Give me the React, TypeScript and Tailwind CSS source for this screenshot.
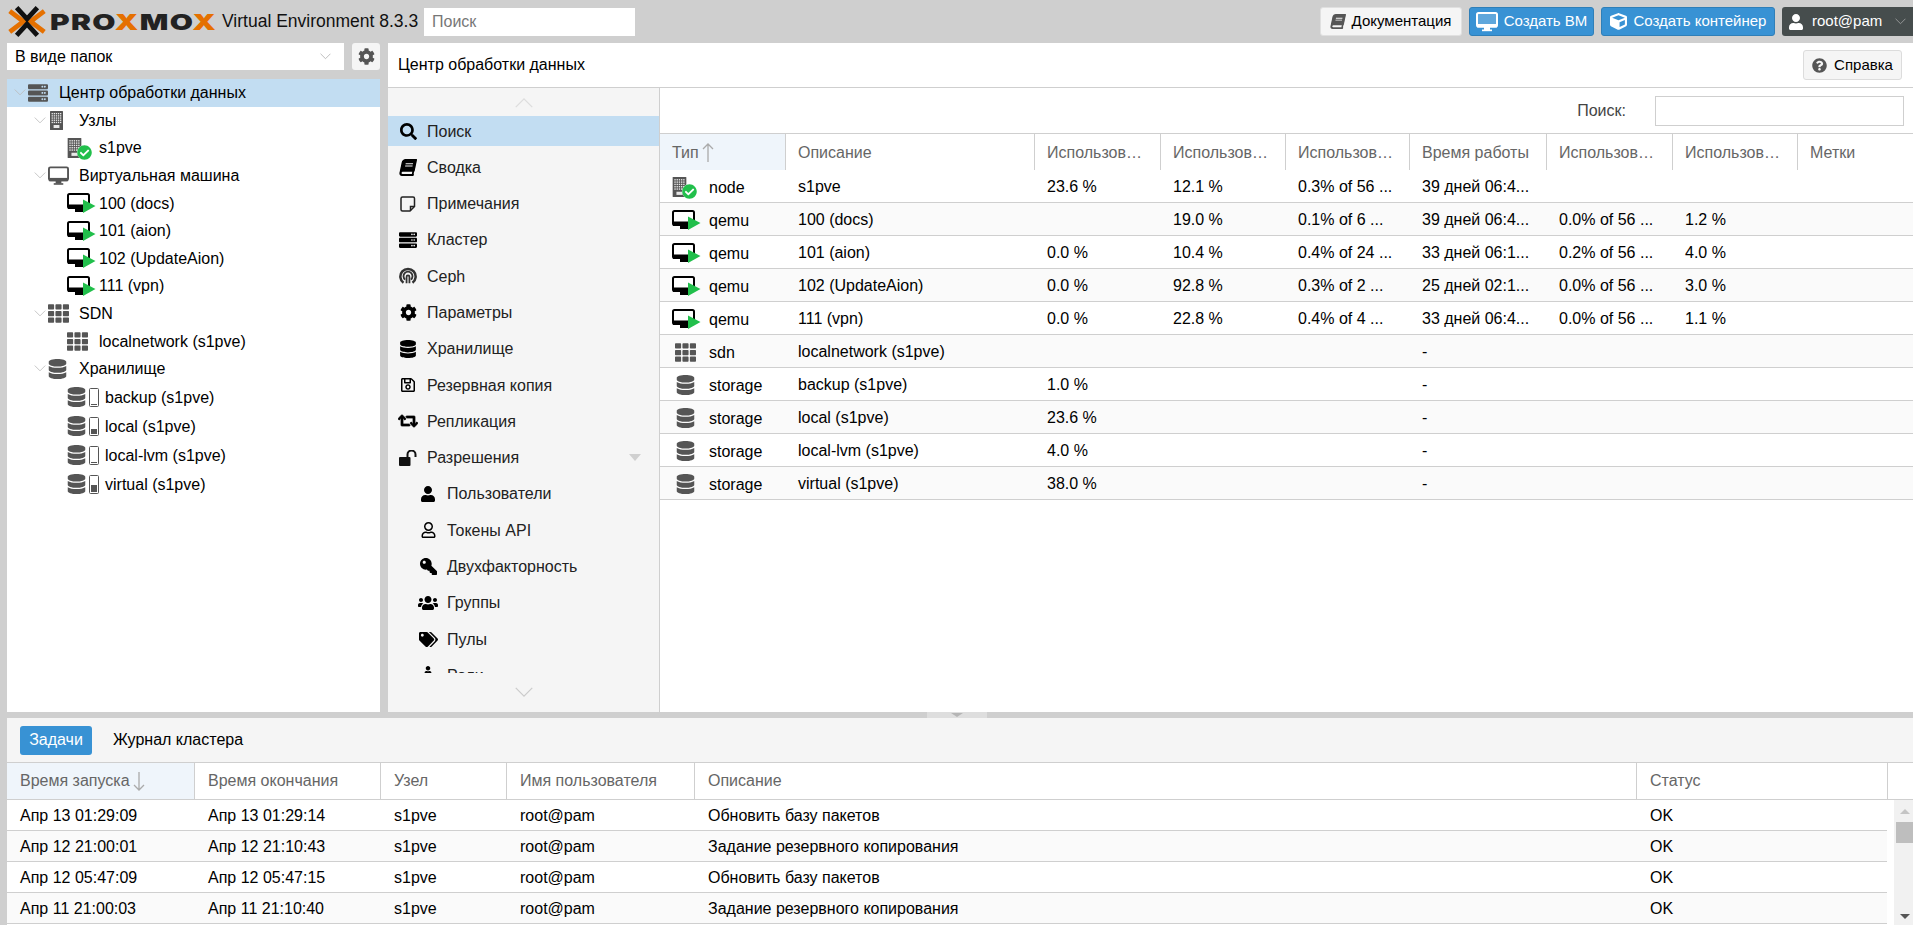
import React from 'react';
import {
  FaBook, FaCheckCircle, FaCog, FaCube, FaDatabase, FaKey, FaMale, FaQuestionCircle, FaRegSave,
  FaRegUser, FaRetweet, FaSearch, FaServer, FaTags, FaTh, FaUser, FaUsers,
} from 'react-icons/fa';

const Chevron = ({ up = false, className = '' }: { up?: boolean; className?: string }) => (
  <svg viewBox="0 0 20 12" className={className} fill="none" stroke="currentColor" strokeWidth="1.4">
    <polyline points={up ? '1,11 10,2 19,11' : '1,1 10,10 19,1'} />
  </svg>
);

const DesktopIcon = ({ className = '', screen = 0.9 }: { className?: string; screen?: number }) => (
  <svg viewBox="0 0 22 20" className={className} fill="none">
    <rect x="1" y="1" width="20" height="13.5" rx="1.5" fill="#fff" fillOpacity={screen} stroke="currentColor" strokeWidth="2" />
    <rect x="1" y="12" width="20" height="3.5" fill="currentColor" />
    <rect x="8" y="15" width="6" height="3" fill="currentColor" />
    <rect x="6" y="17.5" width="10" height="1.7" fill="currentColor" />
  </svg>
);

const QemuIcon = () => (
  <svg viewBox="0 0 29 20" className="w-[29px] h-[20px] shrink-0">
    <rect x="1" y="1" width="21" height="14" rx="1.5" fill="#fff" stroke="#000" strokeWidth="2" />
    <rect x="1" y="11.5" width="21" height="4.5" fill="#000" />
    <rect x="8" y="15" width="8" height="4" fill="#000" />
    <polygon points="16,6.5 28.5,13 16,20" fill="#21bf4b" />
  </svg>
);

const BuildingIcon = ({ className = '' }: { className?: string }) => (
  <svg viewBox="0 0 13 19" className={className}>
    <rect width="13" height="19" rx="0.5" fill="#555" />
    {[2, 4.2, 6.4, 8.6, 10.8].map((y) =>
      [1.6, 3.7, 5.8, 7.9, 10].map((x) => <rect key={`${x}-${y}`} x={x} y={y} width="1.3" height="1.3" fill="#e8e8e8" />),
    )}
    <rect x="3.6" y="14" width="5.8" height="3" fill="#e8e8e8" />
  </svg>
);

const NodeIcon = () => (
  <span className="relative inline-block w-[25px] h-[20px] shrink-0">
    <BuildingIcon className="absolute left-0 top-0 h-[20px] w-[15px]" />
    <span className="absolute left-[10px] top-[7px] w-[15px] h-[15px] rounded-full bg-white">
      <FaCheckCircle className="w-[15px] h-[15px] text-[#21bf4b]" />
    </span>
  </span>
);

const NoteIcon = () => (
  <svg viewBox="0 0 16 16" className="w-[16px] h-[16px]" fill="none" stroke="#222" strokeWidth="1.5">
    <path d="M2.5 1 H13 a1.5 1.5 0 0 1 1.5 1.5 V10.5 L10 15 H2.5 A1.5 1.5 0 0 1 1 13.5 V2.5 A1.5 1.5 0 0 1 2.5 1 Z" />
    <path d="M14 10.5 H10.5 V14.5" />
  </svg>
);

const UnlockIcon = () => (
  <svg viewBox="0 0 18 16" className="w-[18px] h-[16px]" fill="#111">
    <rect x="0" y="7" width="11.5" height="9" rx="1" />
    <path d="M8.5 7 V4.5 A4 4 0 0 1 16.5 4.5 V7" fill="none" stroke="#111" strokeWidth="2" />
  </svg>
);

const CephIcon = () => (
  <svg viewBox="0 0 20 20" className="w-[18px] h-[18px]" fill="none" stroke="#333">
    <path d="M5 17.5 A8.5 8.5 0 1 1 15 17.5" strokeWidth="2.8" />
    <path d="M6.8 14 A5 5 0 1 1 13.2 14" strokeWidth="2" />
    <path d="M8.4 18 V11 a1.6 1.6 0 0 1 3.2 0 V18" strokeWidth="2" />
  </svg>
);

const UsageIcon = ({ level }: { level: number }) => (
  <span className="relative inline-block w-[10px] h-[19px] shrink-0 rounded-[1.5px] border border-[#555] bg-white">
    <span className="absolute left-[1px] right-[1px] bottom-[1px] bg-[#555]" style={{ height: level }} />
  </span>
);

const Arrow = ({ down = false }: { down?: boolean }) => (
  <svg viewBox="0 0 12 20" className="w-[12px] h-[20px] text-[#aaa]" fill="none" stroke="currentColor" strokeWidth="1.3">
    {down ? <path d="M6 1 V19 M1 14 L6 19 L11 14" /> : <path d="M6 19 V1 M1 6 L6 1 L11 6" />}
  </svg>
);

type TreeRow = { depth: number; open?: boolean; icon: React.ReactNode; label: string; selected?: boolean; h?: string };

const storage = (level: number) => (
  <span className="flex items-center gap-[3px] w-[38px] shrink-0">
    <FaDatabase className="w-[19px] h-[20px] text-[#555]" />
    <UsageIcon level={level} />
  </span>
);

const treeRows: TreeRow[] = [
  { depth: 0, open: true, selected: true, icon: <FaServer className="w-[20px] h-[20px] text-[#555]" />, label: 'Центр обработки данных' },
  { depth: 1, open: true, icon: <BuildingIcon className="w-[13px] h-[19px] ml-[2px]" />, label: 'Узлы' },
  { depth: 2, icon: <NodeIcon />, label: 's1pve' },
  { depth: 1, open: true, icon: <DesktopIcon className="w-[21px] h-[20px] text-[#555]" />, label: 'Виртуальная машина' },
  { depth: 2, icon: <QemuIcon />, label: '100 (docs)' },
  { depth: 2, icon: <QemuIcon />, label: '101 (aion)' },
  { depth: 2, icon: <QemuIcon />, label: '102 (UpdateAion)' },
  { depth: 2, icon: <QemuIcon />, label: '111 (vpn)' },
  { depth: 1, open: true, icon: <FaTh className="w-[21px] h-[21px] text-[#555]" />, label: 'SDN' },
  { depth: 2, icon: <FaTh className="w-[21px] h-[21px] text-[#555]" />, label: 'localnetwork (s1pve)' },
  { depth: 1, open: true, icon: <FaDatabase className="w-[19px] h-[20px] text-[#555]" />, label: 'Хранилище' },
  { depth: 2, icon: storage(1), label: 'backup (s1pve)', h: 'h-[29px]' },
  { depth: 2, icon: storage(5), label: 'local (s1pve)', h: 'h-[29px]' },
  { depth: 2, icon: storage(1), label: 'local-lvm (s1pve)', h: 'h-[29px]' },
  { depth: 2, icon: storage(7), label: 'virtual (s1pve)', h: 'h-[29px]' },
];

const depthPad: Record<number, string> = { 0: 'pl-[7px]', 1: 'pl-[27px]', 2: 'pl-[60px]' };
const iconBox: Record<number, string> = { 0: 'min-w-[31px]', 1: 'min-w-[31px]', 2: 'min-w-[32px]' };

const navRows: { icon: React.ReactNode; label: string; sub?: boolean; selected?: boolean; caret?: boolean }[] = [
  { icon: <FaSearch className="w-[17px] h-[17px]" />, label: 'Поиск', selected: true },
  { icon: <FaBook className="w-[16px] h-[17px] -skew-x-12" />, label: 'Сводка' },
  { icon: <NoteIcon />, label: 'Примечания' },
  { icon: <FaServer className="w-[18px] h-[18px]" />, label: 'Кластер' },
  { icon: <CephIcon />, label: 'Ceph' },
  { icon: <FaCog className="w-[17px] h-[17px]" />, label: 'Параметры' },
  { icon: <FaDatabase className="w-[16px] h-[18px]" />, label: 'Хранилище' },
  { icon: <FaRegSave className="w-[16px] h-[16px]" />, label: 'Резервная копия' },
  { icon: <FaRetweet className="w-[20px] h-[18px] stroke-current stroke-[24]" />, label: 'Репликация' },
  { icon: <UnlockIcon />, label: 'Разрешения', caret: true },
  { icon: <FaUser className="w-[14px] h-[16px]" />, label: 'Пользователи', sub: true },
  { icon: <FaRegUser className="w-[15px] h-[16px]" />, label: 'Токены API', sub: true },
  { icon: <FaKey className="w-[17px] h-[17px] -scale-x-100" />, label: 'Двухфакторность', sub: true },
  { icon: <FaUsers className="w-[20px] h-[18px]" />, label: 'Группы', sub: true },
  { icon: <FaTags className="w-[19px] h-[17px]" />, label: 'Пулы', sub: true },
  { icon: <FaMale className="w-[14px] h-[18px]" />, label: 'Роли', sub: true },
];

const colW = ['w-[126px]', 'w-[249px]', 'w-[126px]', 'w-[125px]', 'w-[124px]', 'w-[137px]', 'w-[126px]', 'w-[125px]', 'w-[115px]'];
const headers = ['Тип', 'Описание', 'Использов…', 'Использов…', 'Использов…', 'Время работы', 'Использов…', 'Использов…', 'Метки'];

const typeIcon = (t: string) => {
  if (t === 'node') return <NodeIcon />;
  if (t === 'qemu') return <QemuIcon />;
  if (t === 'sdn') return <FaTh className="w-[21px] h-[21px] ml-[3px] text-[#555]" />;
  return <FaDatabase className="w-[19px] h-[20px] ml-[4px] text-[#555]" />;
};

const resources: string[][] = [
  ['node', 's1pve', '23.6 %', '12.1 %', '0.3% of 56 ...', '39 дней 06:4...', '', ''],
  ['qemu', '100 (docs)', '', '19.0 %', '0.1% of 6 ...', '39 дней 06:4...', '0.0% of 56 ...', '1.2 %'],
  ['qemu', '101 (aion)', '0.0 %', '10.4 %', '0.4% of 24 ...', '33 дней 06:1...', '0.2% of 56 ...', '4.0 %'],
  ['qemu', '102 (UpdateAion)', '0.0 %', '92.8 %', '0.3% of 2 ...', '25 дней 02:1...', '0.0% of 56 ...', '3.0 %'],
  ['qemu', '111 (vpn)', '0.0 %', '22.8 %', '0.4% of 4 ...', '33 дней 06:4...', '0.0% of 56 ...', '1.1 %'],
  ['sdn', 'localnetwork (s1pve)', '', '', '', '-', '', ''],
  ['storage', 'backup (s1pve)', '1.0 %', '', '', '-', '', ''],
  ['storage', 'local (s1pve)', '23.6 %', '', '', '-', '', ''],
  ['storage', 'local-lvm (s1pve)', '4.0 %', '', '', '-', '', ''],
  ['storage', 'virtual (s1pve)', '38.0 %', '', '', '-', '', ''],
];

const taskCols = ['w-[188px]', 'w-[186px]', 'w-[126px]', 'w-[188px]', 'w-[942px]', 'w-[251px]'];
const taskHeaders = ['Время запуска', 'Время окончания', 'Узел', 'Имя пользователя', 'Описание', 'Статус'];
const tasks = [
  ['Апр 13 01:29:09', 'Апр 13 01:29:14', 's1pve', 'root@pam', 'Обновить базу пакетов', 'OK'],
  ['Апр 12 21:00:01', 'Апр 12 21:10:43', 's1pve', 'root@pam', 'Задание резервного копирования', 'OK'],
  ['Апр 12 05:47:09', 'Апр 12 05:47:15', 's1pve', 'root@pam', 'Обновить базу пакетов', 'OK'],
  ['Апр 11 21:00:03', 'Апр 11 21:10:40', 's1pve', 'root@pam', 'Задание резервного копирования', 'OK'],
];

const Logo = () => (
  <div className="flex items-center ml-[8px] w-[214px] shrink-0">
    <svg viewBox="0 0 44 36" className="w-[38px] h-[33px] shrink-0" fill="none" strokeWidth="5.5">
      <polyline points="2,6 18,18 2,30" stroke="#e57000" />
      <polyline points="42,6 26,18 42,30" stroke="#e57000" />
      <polyline points="10,2 22,15 34,2" stroke="#111" />
      <polyline points="10,34 22,21 34,34" stroke="#111" />
    </svg>
    <span className="ml-[4px] origin-left scale-x-[1.36] font-['Inter',sans-serif] font-black text-[22px] leading-none tracking-[1px] text-[#222] whitespace-nowrap">
      PRO<span className="text-[#e57000]">X</span>MO<span className="text-[#e57000]">X</span>
    </span>
  </div>
);

export default function App() {
  return (
    <div className="h-screen w-full overflow-hidden flex flex-col bg-[#cfcfcf] font-['Liberation_Sans',Arial,sans-serif] text-[16px] text-black">
      {/* top bar */}
      <header className="h-[43px] shrink-0 flex items-center">
        <Logo />
        <span className="w-[200px] text-[#111] text-[17.5px] whitespace-nowrap">Virtual Environment 8.3.3</span>
        <div className="ml-[2px] w-[211px] h-[28px] bg-white flex items-center pl-[8px] text-[#777]">Поиск</div>
        <div className="ml-auto flex items-center gap-[7px] h-[29px] text-[15px]">
          <button className="h-full w-[142px] flex items-center justify-center gap-[7px] rounded-[3px] bg-[#f5f5f5] border border-[#e0e0e0]">
            <FaBook className="w-[14px] h-[15px] text-[#555] -skew-x-12" />
            Документация
          </button>
          <button className="h-full w-[125px] flex items-center justify-center gap-[6px] rounded-[3px] bg-[#3892d4] border border-[#2f7fb8] text-white">
            <DesktopIcon className="w-[22px] h-[20px] text-white" screen={0.2} />
            Создать ВМ
          </button>
          <button className="h-full w-[174px] flex items-center justify-center gap-[7px] rounded-[3px] bg-[#3892d4] border border-[#2f7fb8] text-white">
            <FaCube className="w-[17px] h-[17px]" />
            Создать контейнер
          </button>
          <button className="h-full w-[131px] flex items-center pl-[7px] gap-[9px] rounded-l-[3px] bg-[#464d4d] text-white">
            <FaUser className="w-[14px] h-[16px]" />
            root@pam
            <Chevron className="w-[11px] h-[7px] ml-[4px] text-[#aaa]" />
          </button>
        </div>
      </header>

      {/* main */}
      <main className="flex-1 min-h-0 flex pl-[7px] gap-[8px]">
        <aside className="w-[373px] shrink-0 flex flex-col gap-[9px]">
          <div className="flex gap-[8px] h-[27px] shrink-0">
            <div className="flex-1 bg-white flex items-center justify-between pl-[8px] pr-[13px]">
              В виде папок
              <Chevron className="w-[11px] h-[7px] text-[#aaa]" />
            </div>
            <button className="w-[28px] rounded-[3px] bg-[#f5f5f5] flex items-center justify-center">
              <FaCog className="w-[17px] h-[17px] text-[#555]" />
            </button>
          </div>
          <div className="flex-1 bg-white">
            {treeRows.map((r) => (
              <div key={r.label} className={`${r.h ?? 'h-[27.6px]'} flex items-center whitespace-nowrap ${depthPad[r.depth]} ${r.selected ? 'bg-[#c2ddf2]' : ''}`}>
                {r.open && <Chevron className="w-[12px] h-[7px] mr-[2px] text-[#bbb]" />}
                <span className={`${iconBox[r.depth]} shrink-0 flex items-center`}>{r.icon}</span>
                <span className="pt-[1px]">{r.label}</span>
              </div>
            ))}
          </div>
        </aside>

        <section className="flex-1 min-w-0 flex flex-col bg-white">
          <div className="h-[45px] shrink-0 flex items-center justify-between pl-[10px] pr-[11px] border-b border-[#cfcfcf]">
            Центр обработки данных
            <button className="w-[99px] h-[30px] flex items-center justify-center gap-[7px] rounded-[3px] bg-[#f5f5f5] border border-[#dcdcdc] text-[15px]">
              <FaQuestionCircle className="w-[15px] h-[15px] text-[#555]" />
              Справка
            </button>
          </div>
          <div className="flex-1 min-h-0 flex">
            <nav className="w-[272px] shrink-0 flex flex-col bg-[#f5f5f5] border-r border-[#cfcfcf]">
              <div className="h-[28px] shrink-0 flex items-center justify-center">
                <Chevron up className="w-[20px] h-[11px] text-[#ddd]" />
              </div>
              <div className="flex-1 min-h-0 overflow-hidden flex flex-col gap-[6.3px]">
                {navRows.map((n) => (
                  <div key={n.label} className={`h-[30px] shrink-0 flex items-center ${n.sub ? 'pl-[30px]' : 'pl-[10px]'} ${n.selected ? 'bg-[#c2ddf2]' : ''}`}>
                    <span className="w-[20px] shrink-0 flex justify-center">{n.icon}</span>
                    <span className="ml-[9px] text-[#222] pt-[1px]">{n.label}</span>
                    {n.caret && <span className="ml-auto mr-[18px] w-0 h-0 border-x-[6px] border-x-transparent border-t-[7px] border-t-[#d0d0d0]" />}
                  </div>
                ))}
              </div>
              <div className="h-[39px] shrink-0 flex items-center justify-center">
                <Chevron className="w-[20px] h-[11px] text-[#ccc]" />
              </div>
            </nav>

            <div className="flex-1 min-w-0 flex flex-col">
              <div className="h-[45px] shrink-0 flex items-center justify-end pr-[9px] gap-[29px]">
                <span className="text-[#444]">Поиск:</span>
                <div className="w-[249px] h-[30px] bg-white border border-[#cfcfcf]" />
              </div>
              <div className="flex h-[37px] shrink-0 border-t border-[#cfcfcf] text-[#666]">
                {headers.map((h, i) => (
                  <div key={i} className={`${colW[i]} shrink-0 flex items-center pl-[12px] pt-[1px] gap-[3px] whitespace-nowrap ${i < 8 ? 'border-r border-[#cfcfcf]' : ''} ${i === 0 ? 'bg-[#eff5fb]' : ''}`}>
                    {h}
                    {i === 0 && <Arrow />}
                  </div>
                ))}
              </div>
              {resources.map((r, ri) => (
                <div key={r[1]} className={`flex h-[33px] shrink-0 items-center border-b border-[#cfcfcf] ${ri % 2 ? 'bg-[#fafafa]' : 'bg-white'}`}>
                  <div className={`${colW[0]} shrink-0 flex items-center pl-[12px] pt-[2px]`}>
                    <span className="w-[37px] shrink-0 flex items-center">{typeIcon(r[0])}</span>
                    <span className="pt-[1px]">{r[0]}</span>
                  </div>
                  {r.slice(1).map((c, ci) => (
                    <div key={ci} className={`${colW[ci + 1]} shrink-0 pl-[12px] pt-[1px] whitespace-nowrap overflow-hidden`}>{c}</div>
                  ))}
                </div>
              ))}
            </div>
          </div>
        </section>
      </main>

      {/* splitter */}
      <div className="h-[6px] shrink-0 flex justify-center">
        <div className="w-[60px] h-full bg-[#dedede] flex justify-center items-center">
          <span className="w-0 h-0 border-x-[6px] border-x-transparent border-t-[4px] border-t-[#b5b5b5]" />
        </div>
      </div>

      {/* bottom log panel */}
      <footer className="h-[207px] shrink-0 ml-[7px] bg-[#f5f5f5] flex flex-col">
        <div className="h-[44px] shrink-0 flex items-center pl-[13px]">
          <button className="w-[72px] h-[29px] rounded-[3px] bg-[#3892d4] text-white">Задачи</button>
          <span className="ml-[21px]">Журнал кластера</span>
        </div>
        <div className="h-[38px] shrink-0 flex bg-white border-y border-[#cfcfcf] text-[#666]">
          {taskHeaders.map((h, i) => (
            <div key={h} className={`${taskCols[i]} shrink-0 flex items-center pl-[13px] gap-[3px] whitespace-nowrap border-r border-[#cfcfcf] ${i === 0 ? 'bg-[#eff5fb]' : ''}`}>
              {h}
              {i === 0 && <Arrow down />}
            </div>
          ))}
        </div>
        <div className="flex-1 min-h-0 flex bg-white">
          <div className="flex-1 min-w-0 relative">
            {tasks.map((t, ri) => (
              <div key={t[0]} className={`flex h-[31px] w-[1880px] items-center border-b border-[#cfcfcf] pt-[1px] ${ri % 2 ? 'bg-[#fafafa]' : 'bg-white'}`}>
                {t.map((c, ci) => (
                  <div key={ci} className={`${taskCols[ci]} shrink-0 pl-[13px] whitespace-nowrap`}>{c}</div>
                ))}
              </div>
            ))}
          </div>
          <div className="w-[19px] shrink-0 bg-[#f1f1f1] flex flex-col items-end">
            <div className="w-[17px] h-[22px] flex items-center justify-center">
              <span className="w-0 h-0 border-x-[5px] border-x-transparent border-b-[5px] border-b-[#c4c4c4]" />
            </div>
            <div className="w-[17px] h-[21px] bg-[#bebebe]" />
            <div className="mt-auto w-[17px] h-[14px] flex items-center justify-center pb-[4px]">
              <span className="w-0 h-0 border-x-[5px] border-x-transparent border-t-[5px] border-t-[#555]" />
            </div>
          </div>
        </div>
      </footer>
    </div>
  );
}
